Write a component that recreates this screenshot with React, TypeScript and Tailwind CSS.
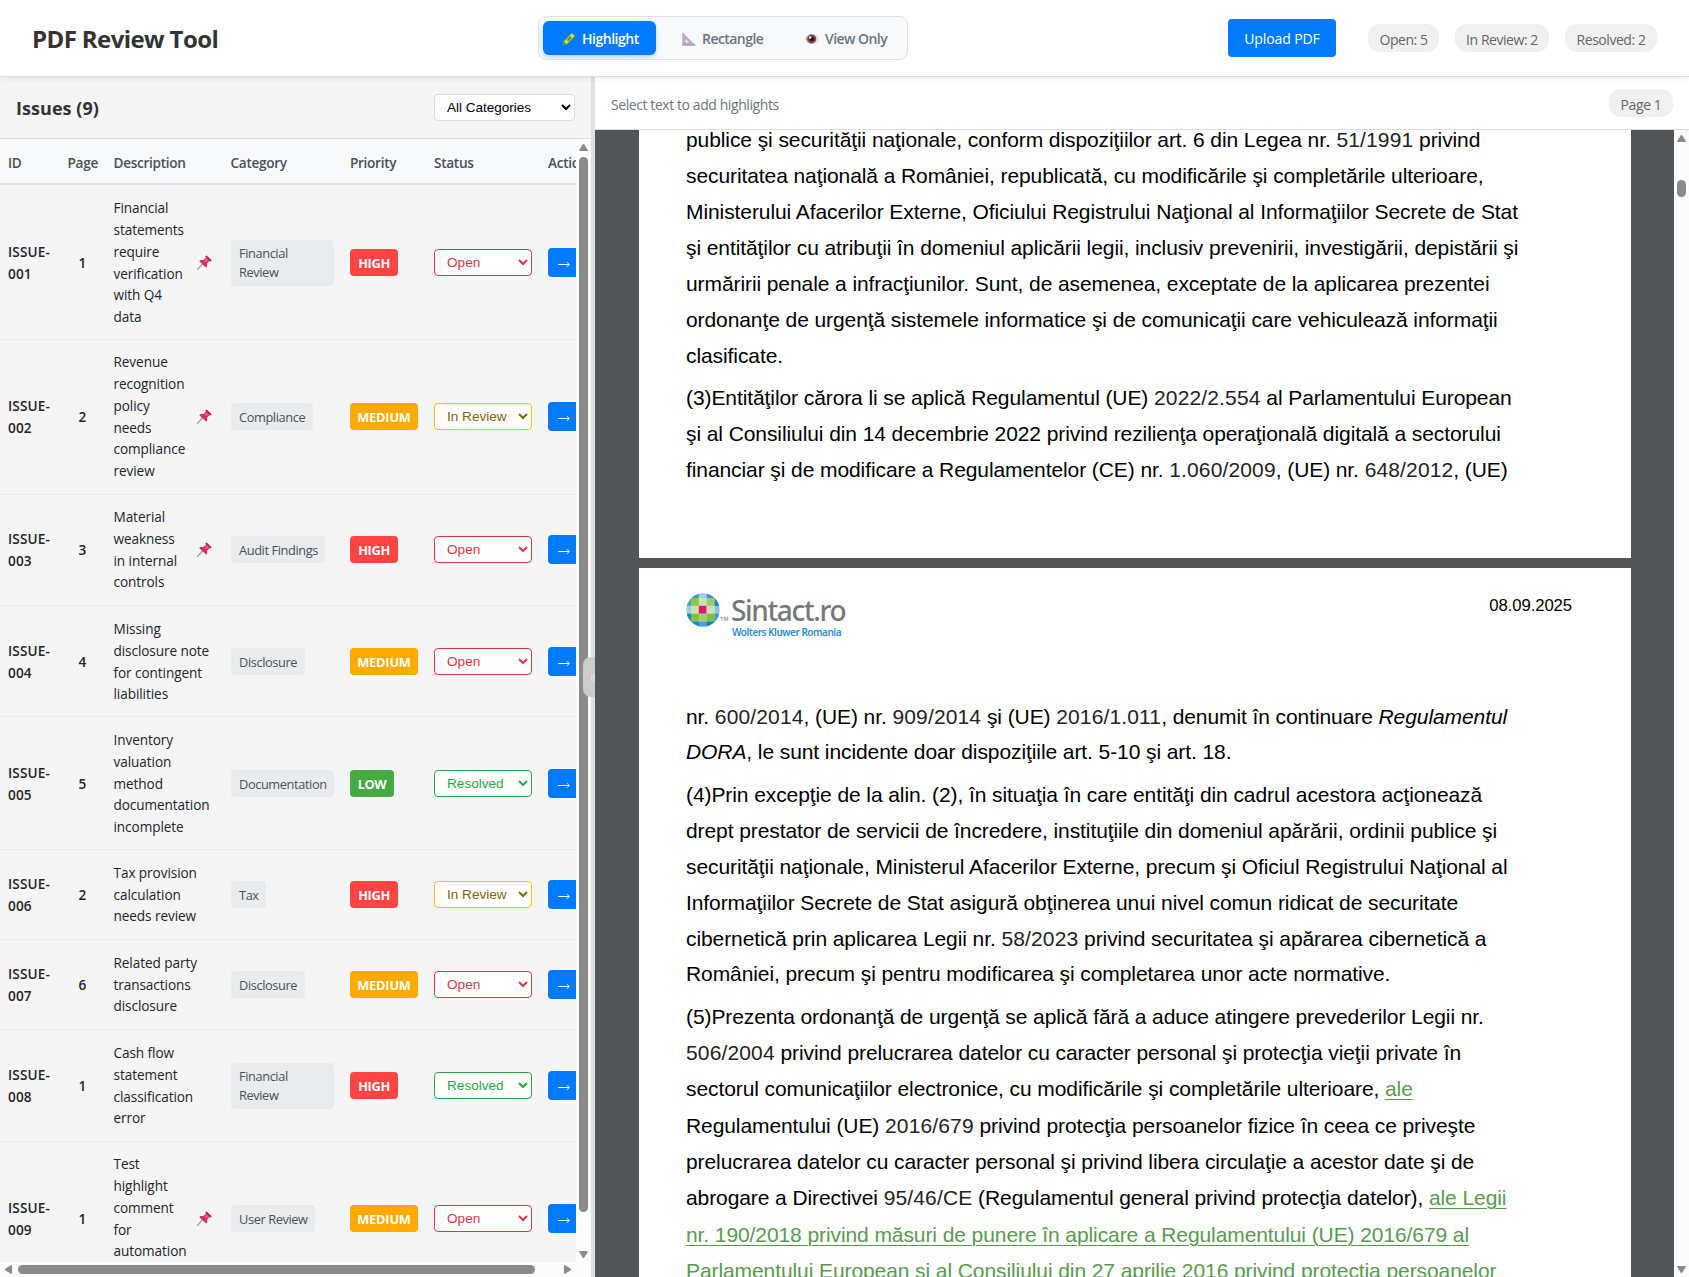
import React from "react";

type Priority = "HIGH" | "MEDIUM" | "LOW";
type Status = "Open" | "In Review" | "Resolved";

interface Issue {
  id: string;
  page: number;
  lines: string[];
  pin?: boolean;
  category: string[];
  priority: Priority;
  status: Status;
  row: string;
}

const issues: Issue[] = [
  { id: "001", page: 1, lines: ["Financial", "statements", "require", "verification", "with Q4", "data"], pin: true, category: ["Financial", "Review"], priority: "HIGH", status: "Open", row: "h-[155px] pt-px" },
  { id: "002", page: 2, lines: ["Revenue", "recognition", "policy", "needs", "compliance", "review"], pin: true, category: ["Compliance"], priority: "MEDIUM", status: "In Review", row: "h-[155px] pb-px" },
  { id: "003", page: 3, lines: ["Material", "weakness", "in internal", "controls"], pin: true, category: ["Audit Findings"], priority: "HIGH", status: "Open", row: "h-[111px] pb-px" },
  { id: "004", page: 4, lines: ["Missing", "disclosure note", "for contingent", "liabilities"], category: ["Disclosure"], priority: "MEDIUM", status: "Open", row: "h-[111px] pt-px" },
  { id: "005", page: 5, lines: ["Inventory", "valuation", "method", "documentation", "incomplete"], category: ["Documentation"], priority: "LOW", status: "Resolved", row: "h-[133px] pt-px" },
  { id: "006", page: 2, lines: ["Tax provision", "calculation", "needs review"], category: ["Tax"], priority: "HIGH", status: "In Review", row: "h-[90px]" },
  { id: "007", page: 6, lines: ["Related party", "transactions", "disclosure"], category: ["Disclosure"], priority: "MEDIUM", status: "Open", row: "h-[90px]" },
  { id: "008", page: 1, lines: ["Cash flow", "statement", "classification", "error"], category: ["Financial", "Review"], priority: "HIGH", status: "Resolved", row: "h-[112px]" },
  { id: "009", page: 1, lines: ["Test", "highlight", "comment", "for", "automation", "testing"], pin: true, category: ["User Review"], priority: "MEDIUM", status: "Open", row: "h-[155px] pb-px" },
];

const priorityStyle: Record<Priority, string> = {
  HIGH: "bg-[#ff4444] w-[48px] tracking-[-0.35px]",
  MEDIUM: "bg-[#ffaa00] w-[68px] tracking-[-0.2px]",
  LOW: "bg-[#44aa44] w-[44px] tracking-[-0.4px]",
};

const statusStyle: Record<Status, string> = {
  Open: "border-[#dc3545] text-[#dc3545]",
  "In Review": "border-[#ffc107] text-[#856404]",
  Resolved: "border-[#28a745] text-[#28a745]",
};

const columns = "grid grid-cols-[59.5px_46px_117px_119.5px_84px_114px_90px]";

function Crayon() {
  return (
    <svg className="h-[14px] w-[14px]" viewBox="0 0 14 14">
      <path d="M0.4 13.6 L1.4 9.6 L4.6 12.6 Z" fill="#4fa94b" />
      <path d="M1.4 9.6 L9.8 0.8 L13.4 3.9 L4.6 12.6 Z" fill="#7cc243" />
      <path d="M2.6 9.5 L9.9 1.9 L12.1 3.9 L4.7 11.4 Z" fill="#e2e14e" />
      <ellipse cx="7.4" cy="6.7" rx="2.7" ry="1.15" transform="rotate(-46 7.4 6.7)" fill="#55582c" />
      <ellipse cx="7.6" cy="6.6" rx="1.5" ry="0.4" transform="rotate(-46 7.6 6.6)" fill="#c9cb55" />
    </svg>
  );
}

function SetSquare() {
  return (
    <svg className="h-[14px] w-[14px]" viewBox="0 0 14 14">
      <path fillRule="evenodd" d="M0.3 0.3 L13.8 13.6 H0.3 Z M3.6 7.2 V10.6 H7.2 Z" fill="#b9aac6" />
      <path d="M0.3 12.2 H12.4 L13.8 13.6 H0.3 Z" fill="#a99cb8" />
    </svg>
  );
}

function Eye() {
  return (
    <svg className="h-[14px] w-[14px]" viewBox="0 0 14 14">
      <ellipse cx="7" cy="7" rx="6.9" ry="5.2" fill="#e3dde8" />
      <path d="M0.4 6.6 Q3 2 7 1.9 L7 12 Q2.5 11.8 0.4 6.6Z" fill="#cdb6bd" />
      <circle cx="6.7" cy="6.9" r="4.5" fill="#7d4046" />
      <circle cx="6.8" cy="7" r="2.3" fill="#2f1217" />
      <circle cx="5.2" cy="5.5" r="1.2" fill="#fbf4f7" />
    </svg>
  );
}

function Pin() {
  return (
    <svg className="h-[15px] w-[15px]" viewBox="0 0 15 15">
      <path d="M0.6 14.4 L5.6 8.8" stroke="#9b9fa6" strokeWidth="1.3" strokeLinecap="round" />
      <path d="M9.4 0.5 L14.5 5.3 L13.5 6.4 L12.6 6 L10 8.7 L10.2 11.6 L9 12.6 L2.3 6.3 L3.4 5.1 L6.4 5.1 L9 2.5 L8.5 1.4 Z" fill="#d92e62" />
      <path d="M9.2 3 L7 5.3 L9.4 7.6 L11.9 5.2 Z" fill="#f0557f" />
      <path d="M8.5 1.4 L9.4 0.5 L14.5 5.3 L13.5 6.4 Z" fill="#b82350" />
    </svg>
  );
}

function Triangle({ dir }: { dir: "up" | "down" | "left" | "right" }) {
  const paths = {
    up: "M4.5 1 Q5 1 5.4 1.6 L8.8 7 Q9 8 8.2 8 H0.8 Q0 8 0.2 7 L3.6 1.6 Q4 1 4.5 1Z",
    down: "M4.5 8 Q4 8 3.6 7.4 L0.2 2 Q0 1 0.8 1 H8.2 Q9 1 8.8 2 L5.4 7.4 Q5 8 4.5 8Z",
    left: "M1 4.5 Q1 4 1.6 3.6 L7 0.2 Q8 0 8 0.8 V8.2 Q8 9 7 8.8 L1.6 5.4 Q1 5 1 4.5Z",
    right: "M8 4.5 Q8 4 7.4 3.6 L2 0.2 Q1 0 1 0.8 V8.2 Q1 9 2 8.8 L7.4 5.4 Q8 5 8 4.5Z",
  };
  return (
    <svg className="h-[9px] w-[9px] shrink-0" viewBox="0 0 9 9">
      <path d={paths[dir]} fill="#8b8b8b" />
    </svg>
  );
}

function Header() {
  return (
    <header className="relative z-10 flex h-[77px] shrink-0 border-b border-[#dddddd] bg-white shadow-[0_2px_4px_rgba(0,0,0,0.07)]">
      <h1 className="w-[538px] shrink-0 pt-[20px] pl-8 text-[24px] leading-[38px] font-bold tracking-[-0.6px] text-[#333333]">PDF Review Tool</h1>
      <div className="mt-4 flex h-[44px] w-[370px] shrink-0 rounded-lg border border-[#dee2e6] bg-[#f8f9fa] p-1 text-[14px] font-semibold text-[#6c757d]">
        <button className="flex h-[34px] w-[113px] items-center gap-[6px] rounded-md bg-[#007bff] pt-px pl-[19px] tracking-[-0.48px] text-white shadow-[0_2px_4px_rgba(0,123,255,0.3)]">
          <Crayon />
          Highlight
        </button>
        <button className="flex h-[34px] w-[124px] items-center gap-[6px] pt-px pl-[26px] tracking-[-0.55px]">
          <SetSquare />
          Rectangle
        </button>
        <button className="flex h-[34px] items-center gap-[6px] pt-px pl-[25px] tracking-[-0.55px]">
          <Eye />
          View Only
        </button>
      </div>
      <div className="flex flex-1 justify-end pr-8">
        <button className="mt-[19px] mr-8 h-[38px] w-[108px] rounded bg-[#007bff] text-[14px] font-medium tracking-[-0.1px] text-white">Upload PDF</button>
        <div className="mt-6 flex h-7 gap-4 text-[14px] leading-[31px] tracking-[-0.45px] text-[#666666]">
          <span className="w-[71px] rounded-[12px] bg-[#f0f0f0] text-center">Open: 5</span>
          <span className="w-[94px] rounded-[12px] bg-[#f0f0f0] text-center">In Review: 2</span>
          <span className="w-[92px] rounded-[12px] bg-[#f0f0f0] text-center">Resolved: 2</span>
        </div>
      </div>
    </header>
  );
}

function IssueRow({ issue }: { issue: Issue }) {
  return (
    <div className={`${columns} ${issue.row} items-center border-b border-[#e9ecef] text-[13.6px] leading-[21.7px] text-[#212529]`}>
      <div className="pl-2 font-semibold tracking-[0.15px]">
        ISSUE-
        <br />
        {issue.id}
      </div>
      <div className="text-center font-semibold">{issue.page}</div>
      <div className="flex items-center justify-between pr-[11px] pl-2">
        <span className="tracking-[-0.08px] whitespace-nowrap">
          {issue.lines.map((l) => (
            <span key={l} className="block">{l}</span>
          ))}
        </span>
        {issue.pin && <Pin />}
      </div>
      <div className="flex pr-2 pl-[8.5px]">
        <span className={`rounded bg-[#e9ecef] pt-[4.5px] pr-[7.5px] pb-[3.5px] pl-2 text-[12.8px] leading-[19px] tracking-[-0.4px] whitespace-nowrap text-[#495057] ${issue.category.length > 1 ? "w-[103px]" : ""}`}>
          {issue.category.map((l) => (
            <span key={l} className="block">{l}</span>
          ))}
        </span>
      </div>
      <div className="pl-2">
        <span className={`block h-[27px] rounded text-center text-[12.8px] leading-[28px] font-bold text-white ${priorityStyle[issue.priority]}`}>{issue.priority}</span>
      </div>
      <div className="pl-2">
        <select defaultValue={issue.status} className={`block h-[27px] w-[98px] rounded border bg-white px-2 pb-px font-['Liberation_Sans',Arial,sans-serif] text-[13.6px] leading-[16px] ${statusStyle[issue.status]}`}>
          <option>Open</option>
          <option>In Review</option>
          <option>Resolved</option>
        </select>
      </div>
      <div className="pl-2">
        <button className="flex h-[29px] w-[38px] items-center rounded bg-[#007bff] pl-[10px]">
          <svg className="mt-[4px] h-[7px] w-[12px]" viewBox="0 0 12 7" fill="none" stroke="#fff" strokeWidth="1">
            <path d="M0 3.5 H11" />
            <path d="M8.8 1.2 L11.4 3.5 L8.8 5.8" strokeWidth="0.9" />
          </svg>
        </button>
      </div>
    </div>
  );
}

function IssuesPanel() {
  return (
    <section className="flex w-[591px] shrink-0 flex-col bg-[#f5f5f5]">
      <div className="flex h-[62px] shrink-0 items-start justify-between border-b border-[#dddddd] pr-4 pl-4">
        <h2 className="pt-[16px] text-[18px] leading-[30px] font-bold tracking-[0.05px] text-[#333333]">Issues (9)</h2>
        <select className="mt-[17px] h-[27px] w-[141px] rounded border border-[#dddddd] bg-white px-2 font-['Liberation_Sans',Arial,sans-serif] text-[13.6px] leading-[16px] tracking-[-0.05px] text-black">
          <option>All Categories</option>
        </select>
      </div>
      <div className="flex min-h-0 flex-1">
        <div className="flex w-[576px] flex-col">
          <div className="flex-1 overflow-hidden">
            <div className={`${columns} h-[46px] border-b-2 border-[#dee2e6] bg-[#f8f9fa] text-[13.6px] leading-[47px] font-semibold tracking-[-0.3px] text-[#495057]`}>
              {["ID", "Page", "Description", "Category", "Priority", "Status", "Actions"].map((h) => (
                <span key={h} className="pl-2">{h}</span>
              ))}
            </div>
            <div className="h-[1077px] overflow-hidden">
              {issues.map((i) => (
                <IssueRow key={i.id} issue={i} />
              ))}
            </div>
          </div>
          <div className="flex h-[15px] shrink-0 items-center bg-[#fcfcfc] pl-1">
            <Triangle dir="left" />
            <div className="ml-[5px] h-[9px] w-[517px] rounded-full bg-[#8b8b8b]" />
            <div className="ml-[28px]">
              <Triangle dir="right" />
            </div>
          </div>
        </div>
        <div className="flex w-[15px] flex-col items-center bg-[#fcfcfc] pt-1">
          <Triangle dir="up" />
          <div className="mt-[5px] h-[1055px] w-[9px] rounded-full bg-[#8b8b8b]" />
          <div className="mt-[38px]">
            <Triangle dir="down" />
          </div>
        </div>
      </div>
    </section>
  );
}

function Divider() {
  return (
    <div className="relative w-1 shrink-0 bg-[#e0e0e0]">
      <div className="absolute top-[580px] right-0 flex h-10 w-3 items-center justify-end rounded-l-[8px] bg-[#cccccc]">
        <svg className="h-[7px] w-1" viewBox="0 0 4 7" fill="#f4f4f4">
          <path d="M0 0.5h1.4v1H0z M2.4 0.5h1.4v1H2.4z M0 3h1.4v1H0z M2.4 3h1.4v1H2.4z M0 5.5h1.4v1H0z M2.4 5.5h1.4v1H2.4z" />
        </svg>
      </div>
    </div>
  );
}

function Line({ h = "h-[36px]", children }: { h?: string; children: React.ReactNode }) {
  return <div className={`leading-[36px] whitespace-nowrap ${h}`}>{children}</div>;
}

const Law = ({ children }: { children: React.ReactNode }) => <span className="tracking-[0.14px] text-[#222222]">{children}</span>;
const Ref = ({ children }: { children: React.ReactNode }) => (
  <span className="text-[#5a9a50] underline decoration-1 underline-offset-[3px]">{children}</span>
);

function Logo() {
  const cells = [
    ["#3b8fd0", "#3b9ad8", "#a3cbe9", "#3b9ad8", "#0f80c4"],
    ["#4aa0dc", "#8cc84b", "#cbe3b0", "#9ccb6c", "#0f80c4"],
    ["#a3c8e8", "#cbe3b0", "#e8156a", "#cbe3b0", "#8fc0e6"],
    ["#1a86c8", "#7dc242", "#9fd070", "#7dc242", "#3b9ad8"],
    ["#0f80c4", "#1a86c8", "#4aa0dc", "#0f80c4", "#0f80c4"],
  ];
  const pos = [0, 5, 12.8, 20.6, 28.6, 34];
  return (
    <div className="flex">
      <svg className="mt-[0.5px] h-[34px] w-[34px]" viewBox="0 0 34 34">
        <defs>
          <clipPath id="disc">
            <circle cx="17" cy="17" r="16.7" />
          </clipPath>
        </defs>
        <g clipPath="url(#disc)">
          {cells.map((row, r) =>
            row.map((c, k) => (
              <rect key={`${r}-${k}`} x={pos[k]} y={pos[r]} width={pos[k + 1] - pos[k] + 0.2} height={pos[r + 1] - pos[r] + 0.2} fill={c} />
            ))
          )}
        </g>
      </svg>
      <span className="mt-[22px] w-[11px] text-[6px] leading-[10px] text-[#777777]">TM</span>
      <div className="whitespace-nowrap font-['Noto_Sans',sans-serif]">
        <div className="mt-[3px] text-[28px] leading-[30px] font-medium tracking-[-1.35px] text-[#77787b]">Sintact.ro</div>
        <div className="pl-px text-[10px] leading-[14px] font-semibold tracking-[-0.5px] text-[#2a8fd0]">Wolters Kluwer Romania</div>
      </div>
    </div>
  );
}

function Viewer() {
  return (
    <section className="flex min-w-0 flex-1 flex-col">
      <div className="flex h-[53px] shrink-0 justify-between border-b border-[#dddddd] bg-white px-4 text-[14px] tracking-[-0.42px]">
        <span className="pt-[18px] leading-[20px] text-[#6c757d]">Select text to add highlights</span>
        <span className="mt-3 h-7 w-[64px] rounded-[12px] bg-[#f0f0f0] text-center leading-[31px] text-[#666666]">Page 1</span>
      </div>
      <div className="flex min-h-0 flex-1 bg-[#525659]">
        <div className="flex-1 overflow-hidden pl-[44px] font-['Liberation_Sans',Arial,sans-serif] text-[21px] tracking-[-0.088px] text-black">
          <div className="h-[428px] w-[992px] overflow-hidden bg-white pl-[47px]">
            <div className="-mt-[8px]">
              <Line>publice şi securităţii naţionale, conform dispoziţiilor art. 6 din Legea nr. <Law>51/1991</Law> privind</Line>
              <Line>securitatea naţională a României, republicată, cu modificările şi completările ulterioare,</Line>
              <Line>Ministerului Afacerilor Externe, Oficiului Registrului Naţional al Informaţiilor Secrete de Stat</Line>
              <Line>şi entităţilor cu atribuţii în domeniul aplicării legii, inclusiv prevenirii, investigării, depistării şi</Line>
              <Line>urmăririi penale a infracţiunilor. Sunt, de asemenea, exceptate de la aplicarea prezentei</Line>
              <Line>ordonanţe de urgenţă sistemele informatice şi de comunicaţii care vehiculează informaţii</Line>
              <Line h="h-[42px]">clasificate.</Line>
              <Line>(3)Entităţilor cărora li se aplică Regulamentul (UE) <Law>2022/2.554</Law> al Parlamentului European</Line>
              <Line>şi al Consiliului din 14 decembrie 2022 privind rezilienţa operaţională digitală a sectorului</Line>
              <Line>financiar şi de modificare a Regulamentelor (CE) nr. <Law>1.060/2009</Law>, (UE) nr. <Law>648/2012</Law>, (UE)</Line>
            </div>
          </div>
          <div className="mt-[10px] h-[720px] w-[992px] bg-white pl-[47px]">
            <div className="flex h-[131px] justify-between pt-6 pr-[59px]">
              <Logo />
              <span className="mt-[2px] text-[16.7px] leading-[24px]">08.09.2025</span>
            </div>
            <Line h="h-[35px]">nr. <Law>600/2014</Law>, (UE) nr. <Law>909/2014</Law> şi (UE) <Law>2016/1.011</Law>, denumit în continuare <i>Regulamentul</i></Line>
            <Line h="h-[43px]"><i>DORA</i>, le sunt incidente doar dispoziţiile art. 5-10 şi art. 18.</Line>
            <Line>(4)Prin excepţie de la alin. (2), în situaţia în care entităţi din cadrul acestora acţionează</Line>
            <Line>drept prestator de servicii de încredere, instituţiile din domeniul apărării, ordinii publice şi</Line>
            <Line>securităţii naţionale, Ministerul Afacerilor Externe, precum şi Oficiul Registrului Naţional al</Line>
            <Line>Informaţiilor Secrete de Stat asigură obţinerea unui nivel comun ridicat de securitate</Line>
            <Line h="h-[35px]">cibernetică prin aplicarea Legii nr. <Law>58/2023</Law> privind securitatea şi apărarea cibernetică a</Line>
            <Line h="h-[43px]">României, precum şi pentru modificarea şi completarea unor acte normative.</Line>
            <Line>(5)Prezenta ordonanţă de urgenţă se aplică fără a aduce atingere prevederilor Legii nr.</Line>
            <Line><Law>506/2004</Law> privind prelucrarea datelor cu caracter personal şi protecţia vieţii private în</Line>
            <Line h="h-[37px]">sectorul comunicaţiilor electronice, cu modificările şi completările ulterioare, <Ref>ale</Ref></Line>
            <Line>Regulamentului (UE) <Law>2016/679</Law> privind protecţia persoanelor fizice în ceea ce priveşte</Line>
            <Line>prelucrarea datelor cu caracter personal şi privind libera circulaţie a acestor date şi de</Line>
            <Line h="h-[37px]">abrogare a Directivei <Law>95/46/CE</Law> (Regulamentul general privind protecţia datelor), <Ref>ale Legii</Ref></Line>
            <Line><Ref>nr. 190/2018 privind măsuri de punere în aplicare a Regulamentului (UE) 2016/679 al</Ref></Line>
            <Line><Ref>Parlamentului European şi al Consiliului din 27 aprilie 2016 privind protecţia persoanelor</Ref></Line>
          </div>
        </div>
        <div className="flex w-[15px] shrink-0 flex-col items-center bg-[#fcfcfc] pt-1">
          <Triangle dir="up" />
          <div className="mt-[37px] h-[17px] w-[9px] rounded-full bg-[#8b8b8b]" />
          <div className="mt-auto mb-[3px] flex">
            <Triangle dir="down" />
          </div>
        </div>
      </div>
    </section>
  );
}

export default function App() {
  return (
    <div className="flex h-[1277px] w-[1689px] flex-col overflow-hidden bg-[#f5f5f5] font-['Open_Sans','Noto_Sans',sans-serif]">
      <Header />
      <main className="flex min-h-0 flex-1">
        <IssuesPanel />
        <Divider />
        <Viewer />
      </main>
    </div>
  );
}
